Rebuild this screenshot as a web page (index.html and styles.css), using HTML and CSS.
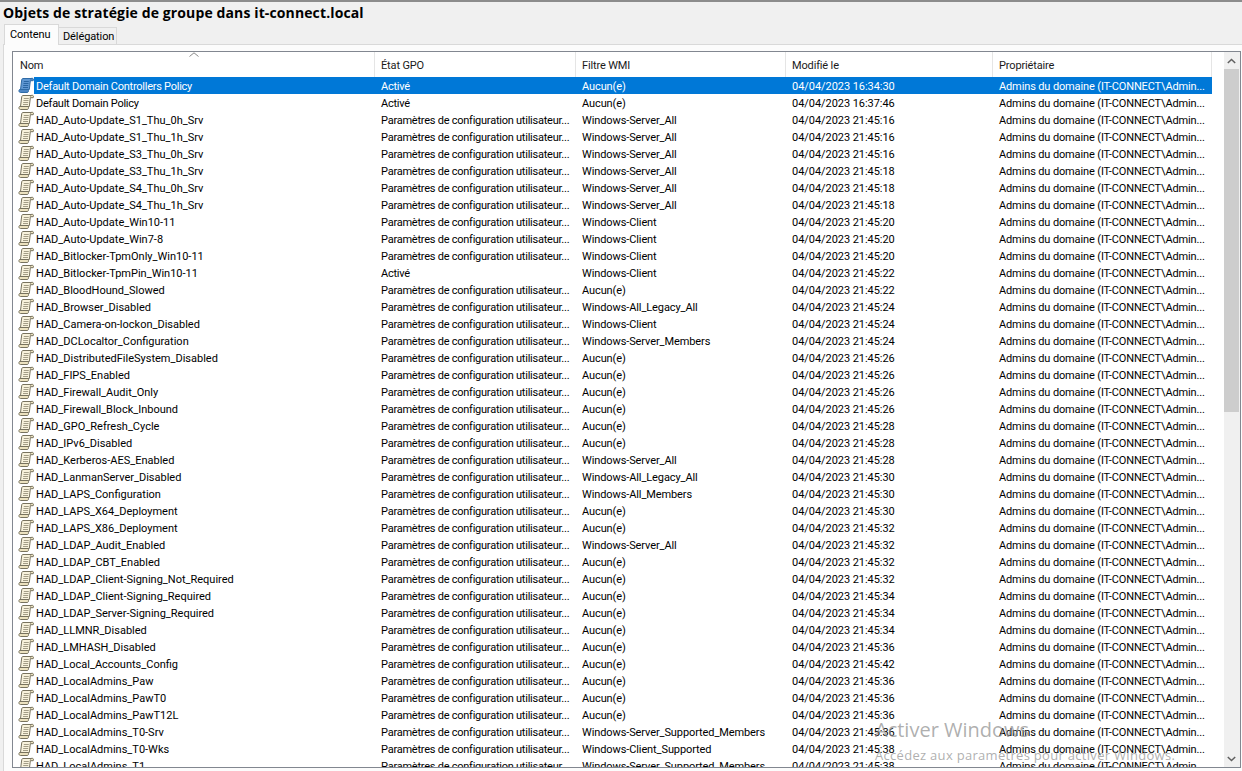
FILE: index.html
```html
<!DOCTYPE html>
<html lang="fr">
<head>
<meta charset="utf-8">
<title>Objets de stratégie de groupe</title>
<link rel="stylesheet" href="styles.css">
</head>
<body>
<svg class="defs" width="0" height="0">
  <defs>
    <symbol id="scroll" viewBox="0 0 16 16">
      <path class="sc-body" d="M5 1.5H13.5C12.6 2 12.4 3 12.3 4L11.3 12.5H2.5L3.7 3C3.8 2 4.2 1.6 5 1.5Z"/>
      <path class="sc-edge" d="M1.5 12.5H10.2C10.8 13.6 10.5 14.8 9.6 15.5H2.5C1 15.5 .4 13.6 1.5 12.5Z"/>
      <path class="sc-tip" d="M13 1.5C14.3 1 15.5 1.4 15.5 2.6L15.2 3.7H12.4"/>
      <path class="sc-line" d="M5.8 4.5H10.8M5.5 6.5H10.5M5.2 8.5H10.2M5 10.5H10"/>
    </symbol>
  </defs>
</svg>
<div class="window">
  <h1 class="title">Objets de stratégie de groupe dans it-connect.local</h1>
  <div class="tabs">
    <div class="tab active">Contenu</div>
    <div class="tab">Délégation</div>
  </div>
  <div class="tabpane">
    <div class="list">
      <div class="grid">
        <div class="row head">
          <div class="cell name"><span class="sort"><svg width="10" height="5" viewBox="0 0 10 5"><path d="M.5 4.5 5 .8 9.5 4.5"/></svg></span>Nom</div>
          <div class="cell state">État GPO</div>
          <div class="cell wmi">Filtre WMI</div>
          <div class="cell date">Modifié le</div>
          <div class="cell owner">Propriétaire</div>
        </div>
        <div class="row selected"><div class="cell name"><svg class="ico"><use href="#scroll"/></svg><span class="label tight">Default Domain Controllers Policy</span></div><div class="cell state">Activé</div><div class="cell wmi">Aucun(e)</div><div class="cell date">04/04/2023 16:34:30</div><div class="cell owner">Admins du domaine (IT-CONNECT\Admin...</div></div>
        <div class="row"><div class="cell name"><svg class="ico"><use href="#scroll"/></svg><span class="label tight">Default Domain Policy</span></div><div class="cell state">Activé</div><div class="cell wmi">Aucun(e)</div><div class="cell date">04/04/2023 16:37:46</div><div class="cell owner">Admins du domaine (IT-CONNECT\Admin...</div></div>
        <div class="row"><div class="cell name"><svg class="ico"><use href="#scroll"/></svg><span class="label">HAD_Auto-Update_S1_Thu_0h_Srv</span></div><div class="cell state">Paramètres de configuration utilisateur...</div><div class="cell wmi">Windows-Server_All</div><div class="cell date">04/04/2023 21:45:16</div><div class="cell owner">Admins du domaine (IT-CONNECT\Admin...</div></div>
        <div class="row"><div class="cell name"><svg class="ico"><use href="#scroll"/></svg><span class="label">HAD_Auto-Update_S1_Thu_1h_Srv</span></div><div class="cell state">Paramètres de configuration utilisateur...</div><div class="cell wmi">Windows-Server_All</div><div class="cell date">04/04/2023 21:45:16</div><div class="cell owner">Admins du domaine (IT-CONNECT\Admin...</div></div>
        <div class="row"><div class="cell name"><svg class="ico"><use href="#scroll"/></svg><span class="label">HAD_Auto-Update_S3_Thu_0h_Srv</span></div><div class="cell state">Paramètres de configuration utilisateur...</div><div class="cell wmi">Windows-Server_All</div><div class="cell date">04/04/2023 21:45:16</div><div class="cell owner">Admins du domaine (IT-CONNECT\Admin...</div></div>
        <div class="row"><div class="cell name"><svg class="ico"><use href="#scroll"/></svg><span class="label">HAD_Auto-Update_S3_Thu_1h_Srv</span></div><div class="cell state">Paramètres de configuration utilisateur...</div><div class="cell wmi">Windows-Server_All</div><div class="cell date">04/04/2023 21:45:18</div><div class="cell owner">Admins du domaine (IT-CONNECT\Admin...</div></div>
        <div class="row"><div class="cell name"><svg class="ico"><use href="#scroll"/></svg><span class="label">HAD_Auto-Update_S4_Thu_0h_Srv</span></div><div class="cell state">Paramètres de configuration utilisateur...</div><div class="cell wmi">Windows-Server_All</div><div class="cell date">04/04/2023 21:45:18</div><div class="cell owner">Admins du domaine (IT-CONNECT\Admin...</div></div>
        <div class="row"><div class="cell name"><svg class="ico"><use href="#scroll"/></svg><span class="label">HAD_Auto-Update_S4_Thu_1h_Srv</span></div><div class="cell state">Paramètres de configuration utilisateur...</div><div class="cell wmi">Windows-Server_All</div><div class="cell date">04/04/2023 21:45:18</div><div class="cell owner">Admins du domaine (IT-CONNECT\Admin...</div></div>
        <div class="row"><div class="cell name"><svg class="ico"><use href="#scroll"/></svg><span class="label">HAD_Auto-Update_Win10-11</span></div><div class="cell state">Paramètres de configuration utilisateur...</div><div class="cell wmi">Windows-Client</div><div class="cell date">04/04/2023 21:45:20</div><div class="cell owner">Admins du domaine (IT-CONNECT\Admin...</div></div>
        <div class="row"><div class="cell name"><svg class="ico"><use href="#scroll"/></svg><span class="label">HAD_Auto-Update_Win7-8</span></div><div class="cell state">Paramètres de configuration utilisateur...</div><div class="cell wmi">Windows-Client</div><div class="cell date">04/04/2023 21:45:20</div><div class="cell owner">Admins du domaine (IT-CONNECT\Admin...</div></div>
        <div class="row"><div class="cell name"><svg class="ico"><use href="#scroll"/></svg><span class="label">HAD_Bitlocker-TpmOnly_Win10-11</span></div><div class="cell state">Paramètres de configuration utilisateur...</div><div class="cell wmi">Windows-Client</div><div class="cell date">04/04/2023 21:45:20</div><div class="cell owner">Admins du domaine (IT-CONNECT\Admin...</div></div>
        <div class="row"><div class="cell name"><svg class="ico"><use href="#scroll"/></svg><span class="label">HAD_Bitlocker-TpmPin_Win10-11</span></div><div class="cell state">Activé</div><div class="cell wmi">Windows-Client</div><div class="cell date">04/04/2023 21:45:22</div><div class="cell owner">Admins du domaine (IT-CONNECT\Admin...</div></div>
        <div class="row"><div class="cell name"><svg class="ico"><use href="#scroll"/></svg><span class="label">HAD_BloodHound_Slowed</span></div><div class="cell state">Paramètres de configuration utilisateur...</div><div class="cell wmi">Aucun(e)</div><div class="cell date">04/04/2023 21:45:22</div><div class="cell owner">Admins du domaine (IT-CONNECT\Admin...</div></div>
        <div class="row"><div class="cell name"><svg class="ico"><use href="#scroll"/></svg><span class="label">HAD_Browser_Disabled</span></div><div class="cell state">Paramètres de configuration utilisateur...</div><div class="cell wmi">Windows-All_Legacy_All</div><div class="cell date">04/04/2023 21:45:24</div><div class="cell owner">Admins du domaine (IT-CONNECT\Admin...</div></div>
        <div class="row"><div class="cell name"><svg class="ico"><use href="#scroll"/></svg><span class="label">HAD_Camera-on-lockon_Disabled</span></div><div class="cell state">Paramètres de configuration utilisateur...</div><div class="cell wmi">Windows-Client</div><div class="cell date">04/04/2023 21:45:24</div><div class="cell owner">Admins du domaine (IT-CONNECT\Admin...</div></div>
        <div class="row"><div class="cell name"><svg class="ico"><use href="#scroll"/></svg><span class="label">HAD_DCLocaltor_Configuration</span></div><div class="cell state">Paramètres de configuration utilisateur...</div><div class="cell wmi">Windows-Server_Members</div><div class="cell date">04/04/2023 21:45:24</div><div class="cell owner">Admins du domaine (IT-CONNECT\Admin...</div></div>
        <div class="row"><div class="cell name"><svg class="ico"><use href="#scroll"/></svg><span class="label">HAD_DistributedFileSystem_Disabled</span></div><div class="cell state">Paramètres de configuration utilisateur...</div><div class="cell wmi">Aucun(e)</div><div class="cell date">04/04/2023 21:45:26</div><div class="cell owner">Admins du domaine (IT-CONNECT\Admin...</div></div>
        <div class="row"><div class="cell name"><svg class="ico"><use href="#scroll"/></svg><span class="label">HAD_FIPS_Enabled</span></div><div class="cell state">Paramètres de configuration utilisateur...</div><div class="cell wmi">Aucun(e)</div><div class="cell date">04/04/2023 21:45:26</div><div class="cell owner">Admins du domaine (IT-CONNECT\Admin...</div></div>
        <div class="row"><div class="cell name"><svg class="ico"><use href="#scroll"/></svg><span class="label">HAD_Firewall_Audit_Only</span></div><div class="cell state">Paramètres de configuration utilisateur...</div><div class="cell wmi">Aucun(e)</div><div class="cell date">04/04/2023 21:45:26</div><div class="cell owner">Admins du domaine (IT-CONNECT\Admin...</div></div>
        <div class="row"><div class="cell name"><svg class="ico"><use href="#scroll"/></svg><span class="label">HAD_Firewall_Block_Inbound</span></div><div class="cell state">Paramètres de configuration utilisateur...</div><div class="cell wmi">Aucun(e)</div><div class="cell date">04/04/2023 21:45:26</div><div class="cell owner">Admins du domaine (IT-CONNECT\Admin...</div></div>
        <div class="row"><div class="cell name"><svg class="ico"><use href="#scroll"/></svg><span class="label">HAD_GPO_Refresh_Cycle</span></div><div class="cell state">Paramètres de configuration utilisateur...</div><div class="cell wmi">Aucun(e)</div><div class="cell date">04/04/2023 21:45:28</div><div class="cell owner">Admins du domaine (IT-CONNECT\Admin...</div></div>
        <div class="row"><div class="cell name"><svg class="ico"><use href="#scroll"/></svg><span class="label">HAD_IPv6_Disabled</span></div><div class="cell state">Paramètres de configuration utilisateur...</div><div class="cell wmi">Aucun(e)</div><div class="cell date">04/04/2023 21:45:28</div><div class="cell owner">Admins du domaine (IT-CONNECT\Admin...</div></div>
        <div class="row"><div class="cell name"><svg class="ico"><use href="#scroll"/></svg><span class="label">HAD_Kerberos-AES_Enabled</span></div><div class="cell state">Paramètres de configuration utilisateur...</div><div class="cell wmi">Windows-Server_All</div><div class="cell date">04/04/2023 21:45:28</div><div class="cell owner">Admins du domaine (IT-CONNECT\Admin...</div></div>
        <div class="row"><div class="cell name"><svg class="ico"><use href="#scroll"/></svg><span class="label">HAD_LanmanServer_Disabled</span></div><div class="cell state">Paramètres de configuration utilisateur...</div><div class="cell wmi">Windows-All_Legacy_All</div><div class="cell date">04/04/2023 21:45:30</div><div class="cell owner">Admins du domaine (IT-CONNECT\Admin...</div></div>
        <div class="row"><div class="cell name"><svg class="ico"><use href="#scroll"/></svg><span class="label">HAD_LAPS_Configuration</span></div><div class="cell state">Paramètres de configuration utilisateur...</div><div class="cell wmi">Windows-All_Members</div><div class="cell date">04/04/2023 21:45:30</div><div class="cell owner">Admins du domaine (IT-CONNECT\Admin...</div></div>
        <div class="row"><div class="cell name"><svg class="ico"><use href="#scroll"/></svg><span class="label">HAD_LAPS_X64_Deployment</span></div><div class="cell state">Paramètres de configuration utilisateur...</div><div class="cell wmi">Aucun(e)</div><div class="cell date">04/04/2023 21:45:30</div><div class="cell owner">Admins du domaine (IT-CONNECT\Admin...</div></div>
        <div class="row"><div class="cell name"><svg class="ico"><use href="#scroll"/></svg><span class="label">HAD_LAPS_X86_Deployment</span></div><div class="cell state">Paramètres de configuration utilisateur...</div><div class="cell wmi">Aucun(e)</div><div class="cell date">04/04/2023 21:45:32</div><div class="cell owner">Admins du domaine (IT-CONNECT\Admin...</div></div>
        <div class="row"><div class="cell name"><svg class="ico"><use href="#scroll"/></svg><span class="label">HAD_LDAP_Audit_Enabled</span></div><div class="cell state">Paramètres de configuration utilisateur...</div><div class="cell wmi">Windows-Server_All</div><div class="cell date">04/04/2023 21:45:32</div><div class="cell owner">Admins du domaine (IT-CONNECT\Admin...</div></div>
        <div class="row"><div class="cell name"><svg class="ico"><use href="#scroll"/></svg><span class="label">HAD_LDAP_CBT_Enabled</span></div><div class="cell state">Paramètres de configuration utilisateur...</div><div class="cell wmi">Aucun(e)</div><div class="cell date">04/04/2023 21:45:32</div><div class="cell owner">Admins du domaine (IT-CONNECT\Admin...</div></div>
        <div class="row"><div class="cell name"><svg class="ico"><use href="#scroll"/></svg><span class="label">HAD_LDAP_Client-Signing_Not_Required</span></div><div class="cell state">Paramètres de configuration utilisateur...</div><div class="cell wmi">Aucun(e)</div><div class="cell date">04/04/2023 21:45:32</div><div class="cell owner">Admins du domaine (IT-CONNECT\Admin...</div></div>
        <div class="row"><div class="cell name"><svg class="ico"><use href="#scroll"/></svg><span class="label">HAD_LDAP_Client-Signing_Required</span></div><div class="cell state">Paramètres de configuration utilisateur...</div><div class="cell wmi">Aucun(e)</div><div class="cell date">04/04/2023 21:45:34</div><div class="cell owner">Admins du domaine (IT-CONNECT\Admin...</div></div>
        <div class="row"><div class="cell name"><svg class="ico"><use href="#scroll"/></svg><span class="label">HAD_LDAP_Server-Signing_Required</span></div><div class="cell state">Paramètres de configuration utilisateur...</div><div class="cell wmi">Aucun(e)</div><div class="cell date">04/04/2023 21:45:34</div><div class="cell owner">Admins du domaine (IT-CONNECT\Admin...</div></div>
        <div class="row"><div class="cell name"><svg class="ico"><use href="#scroll"/></svg><span class="label">HAD_LLMNR_Disabled</span></div><div class="cell state">Paramètres de configuration utilisateur...</div><div class="cell wmi">Aucun(e)</div><div class="cell date">04/04/2023 21:45:34</div><div class="cell owner">Admins du domaine (IT-CONNECT\Admin...</div></div>
        <div class="row"><div class="cell name"><svg class="ico"><use href="#scroll"/></svg><span class="label">HAD_LMHASH_Disabled</span></div><div class="cell state">Paramètres de configuration utilisateur...</div><div class="cell wmi">Aucun(e)</div><div class="cell date">04/04/2023 21:45:36</div><div class="cell owner">Admins du domaine (IT-CONNECT\Admin...</div></div>
        <div class="row"><div class="cell name"><svg class="ico"><use href="#scroll"/></svg><span class="label">HAD_Local_Accounts_Config</span></div><div class="cell state">Paramètres de configuration utilisateur...</div><div class="cell wmi">Aucun(e)</div><div class="cell date">04/04/2023 21:45:42</div><div class="cell owner">Admins du domaine (IT-CONNECT\Admin...</div></div>
        <div class="row"><div class="cell name"><svg class="ico"><use href="#scroll"/></svg><span class="label">HAD_LocalAdmins_Paw</span></div><div class="cell state">Paramètres de configuration utilisateur...</div><div class="cell wmi">Aucun(e)</div><div class="cell date">04/04/2023 21:45:36</div><div class="cell owner">Admins du domaine (IT-CONNECT\Admin...</div></div>
        <div class="row"><div class="cell name"><svg class="ico"><use href="#scroll"/></svg><span class="label">HAD_LocalAdmins_PawT0</span></div><div class="cell state">Paramètres de configuration utilisateur...</div><div class="cell wmi">Aucun(e)</div><div class="cell date">04/04/2023 21:45:36</div><div class="cell owner">Admins du domaine (IT-CONNECT\Admin...</div></div>
        <div class="row"><div class="cell name"><svg class="ico"><use href="#scroll"/></svg><span class="label">HAD_LocalAdmins_PawT12L</span></div><div class="cell state">Paramètres de configuration utilisateur...</div><div class="cell wmi">Aucun(e)</div><div class="cell date">04/04/2023 21:45:36</div><div class="cell owner">Admins du domaine (IT-CONNECT\Admin...</div></div>
        <div class="row"><div class="cell name"><svg class="ico"><use href="#scroll"/></svg><span class="label">HAD_LocalAdmins_T0-Srv</span></div><div class="cell state">Paramètres de configuration utilisateur...</div><div class="cell wmi">Windows-Server_Supported_Members</div><div class="cell date">04/04/2023 21:45:36</div><div class="cell owner">Admins du domaine (IT-CONNECT\Admin...</div></div>
        <div class="row"><div class="cell name"><svg class="ico"><use href="#scroll"/></svg><span class="label">HAD_LocalAdmins_T0-Wks</span></div><div class="cell state">Paramètres de configuration utilisateur...</div><div class="cell wmi">Windows-Client_Supported</div><div class="cell date">04/04/2023 21:45:38</div><div class="cell owner">Admins du domaine (IT-CONNECT\Admin...</div></div>
        <div class="row"><div class="cell name"><svg class="ico"><use href="#scroll"/></svg><span class="label">HAD_LocalAdmins_T1</span></div><div class="cell state">Paramètres de configuration utilisateur...</div><div class="cell wmi">Windows-Server_Supported_Members</div><div class="cell date">04/04/2023 21:45:38</div><div class="cell owner">Admins du domaine (IT-CONNECT\Admin...</div></div>
      </div>
      <div class="scrollbar">
        <div class="arrow"><svg width="9" height="6" viewBox="0 0 9 6"><path d="M.8 5 4.5 1.5 8.2 5"/></svg></div>
        <div class="track"><div class="thumb"></div></div>
        <div class="arrow"><svg width="9" height="6" viewBox="0 0 9 6"><path d="M.8 1 4.5 4.5 8.2 1"/></svg></div>
      </div>
    </div>
  </div>
</div>
<div class="watermark">
  <div class="wm-title">Activer Windows</div>
  <div class="wm-sub">Accédez aux paramètres pour activer Windows.</div>
</div>
</body>
</html>
```
FILE: styles.css
```css
* { box-sizing: border-box; }
html, body { margin: 0; height: 100%; overflow: hidden; }
body { background: #f0f0f0; font-family: Roboto, "Liberation Sans", sans-serif; font-size: 11px; color: #000; }
.defs { position: absolute; }
.window { height: 771px; display: flex; flex-direction: column; border-top: 2px solid #8c8c8c; }
.title { margin: 0; height: 22px; padding: 2px 0 0 3px; font: bold 14px/18px "Open Sans", sans-serif; letter-spacing: .12px; color: #000; }
.tabs { height: 20px; padding-left: 4px; display: flex; align-items: flex-end; position: relative; z-index: 1; }
.tab { height: 17px; width: 58px; padding: 0 0 0 4px; border: 1px solid #d9d9d9; border-left: 0; border-bottom: 0; line-height: 17px; background: #f0f0f0; color: #000; letter-spacing: -.1px; }
.tab.active { height: 21px; width: 55px; margin: 0 0 -1px; padding: 1px 0 0 5px; background: #fcfcfc; border: 1px solid #d9d9d9; border-bottom: 0; }
.tabpane { flex: 1; min-height: 0; background: #fcfcfc; border-top: 1px solid #d9d9d9; border-left: 1px solid #d9d9d9; margin-left: 3px; padding: 6px 1px 3px 8px; }
.list { height: 100%; display: flex; background: #fff; border: 1px solid #828790; overflow: hidden; }
.grid { flex: 1; min-width: 0; overflow: hidden; }
.row { display: flex; height: 17px; line-height: 19px; white-space: nowrap; --sc-fill: #f8f2dc; --sc-edge: #ece2bf; --sc-stroke: #77725e; --sc-line: #a39d87; }
.row.head { height: 25px; line-height: 27px; color: #1a1a1a; }
.row.head .cell { border-right: 1px solid #e5e5e5; position: relative; padding-left: 6px; letter-spacing: -.15px; }
.row.head .name { padding-left: 7px; }
.cell { overflow: hidden; padding-left: 6px; flex: none; }
.name { width: 362px; display: flex; align-items: flex-start; padding-left: 5px; }
.head .name { display: block; }
.state { width: 201px; letter-spacing: -.24px; }
.wmi { width: 210px; letter-spacing: -.1px; }
.date { width: 207px; letter-spacing: -.05px; }
.owner { width: 219px; letter-spacing: -.13px; }
.row.selected { --sc-fill: #5f97d2; --sc-edge: #4c86c4; --sc-stroke: #2f6ba6; --sc-line: #2a66a3; }
.row.selected .cell { background: #0078d7; color: #fff; }
.row.selected .name { background: linear-gradient(to right, #fff 21px, #0078d7 21px); }
.ico { width: 16px; height: 16px; flex: none; margin-right: 1px; }
.sc-body { fill: var(--sc-fill); stroke: var(--sc-stroke); stroke-width: 1; stroke-linejoin: round; }
.sc-tip { fill: var(--sc-edge); stroke: var(--sc-stroke); stroke-width: 1; stroke-linejoin: round; }
.sc-edge { fill: var(--sc-edge); stroke: var(--sc-stroke); stroke-width: 1; stroke-linejoin: round; }
.sc-line { fill: none; stroke: var(--sc-line); stroke-width: 1; }
.label { padding-left: 1px; }
.tight { letter-spacing: -.25px; }
.sort { position: absolute; top: 0; left: 0; right: 0; height: 6px; display: flex; justify-content: center; }
.sort svg { display: block; fill: none; stroke: #8a8a8a; stroke-width: 1; }
.scrollbar { width: 16px; flex: none; display: flex; flex-direction: column; background: #f0f0f0; margin-left: 11px; padding-right: 1px; }
.arrow { height: 17px; flex: none; display: flex; align-items: center; justify-content: center; }
.arrow svg { fill: none; stroke: #606060; stroke-width: 1.5; }
.track { flex: 1; }
.thumb { height: 343px; background: #cdcdcd; }
.watermark { position: absolute; left: 875px; top: 717px; color: rgba(140, 140, 140, .7); pointer-events: none; }
.wm-title { font: 20px/26px "Open Sans", sans-serif; }
.wm-sub { font: 13px/17px "Open Sans", sans-serif; letter-spacing: .3px; margin-top: 4px; }
```
